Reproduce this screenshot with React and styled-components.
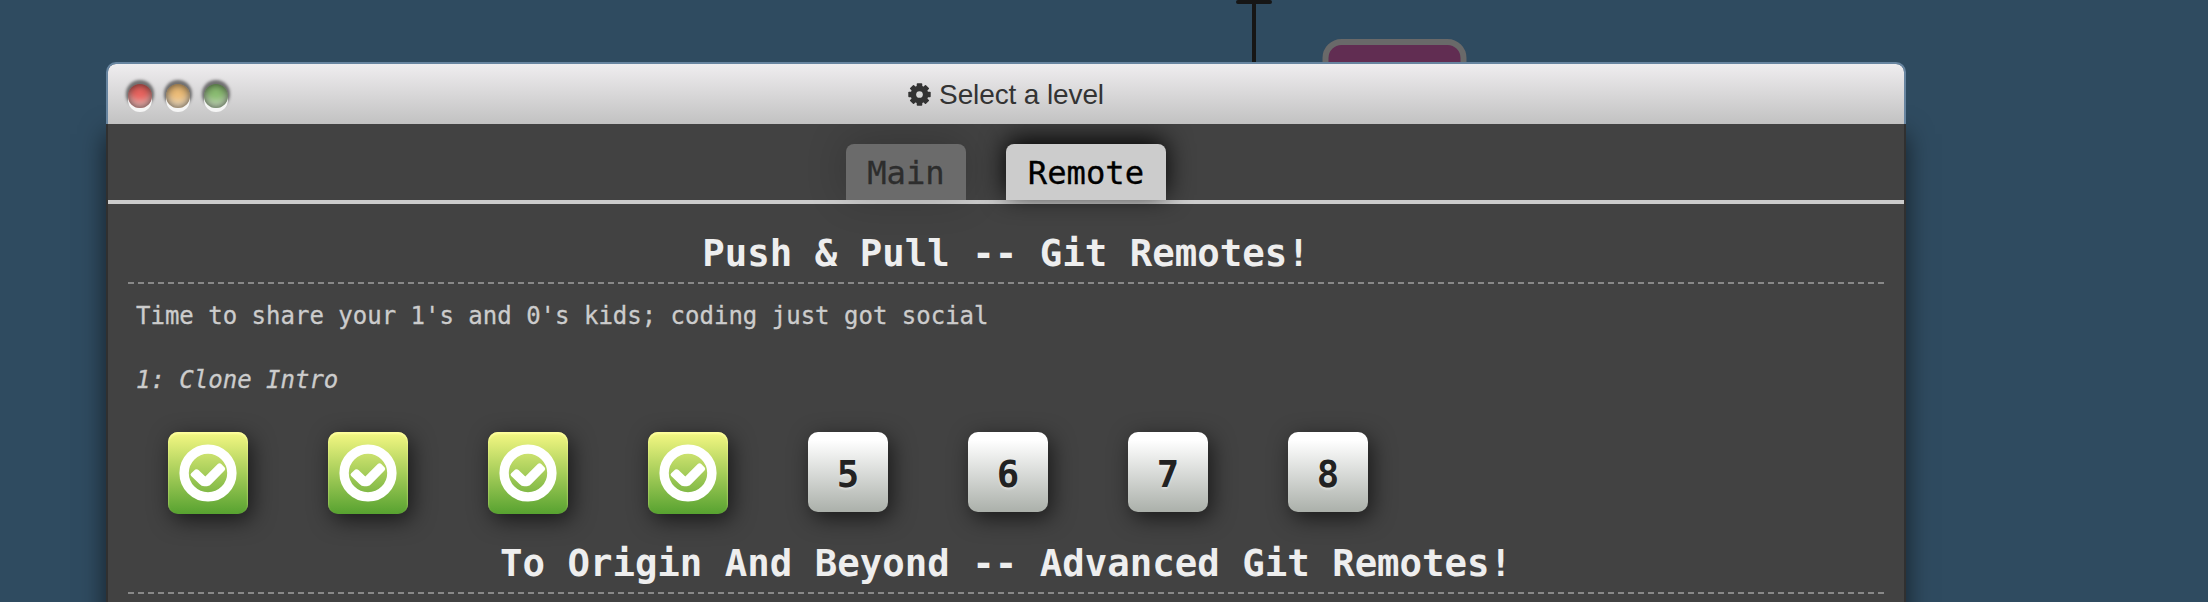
import React from 'react';
import styled, { createGlobalStyle, css } from 'styled-components';

const mono = `"DejaVu Sans Mono", "Liberation Mono", monospace`;

const GlobalStyle = createGlobalStyle`
  * { box-sizing: border-box; }
  body { margin: 0; background: #2f4b60; overflow: hidden; }
`;

const Desktop = styled.main`
  position: relative;
  height: 602px;
  padding: 62px 302px 0 106px;
  overflow: hidden;
  background: #2f4b60;
  font-family: ${mono};
`;

const CommitTree = styled.svg`
  position: absolute;
  left: 1180px;
  top: 0;
`;

const Window = styled.section`
  position: relative;
  width: 1800px;
`;

const TitleBar = styled.header`
  position: relative;
  z-index: 1;
  display: flex;
  align-items: center;
  height: 62px;
  padding: 3px 20px 0;
  border: 2px solid #6885a0;
  border-bottom: 0;
  border-radius: 10px 10px 0 0;
  background: linear-gradient(#efedef, #c2c2c2);
  background-clip: padding-box;
`;

const Lights = styled.div`
  display: flex;
  flex: 1;
  gap: 14px;
`;

const Light = styled.span`
  width: 24px;
  height: 24px;
  border-radius: 50%;
  background: ${(p) => p.$color};
  box-shadow: 0 4px 0 #f5f5f5, 0 -2px 3px 2px rgba(0, 0, 0, 0.5),
    inset 0 0 8px rgba(0, 0, 0, 0.7), inset 0 -7px 6px rgba(255, 255, 255, 0.55);
`;

const Title = styled.h1`
  display: flex;
  align-items: center;
  gap: 8px;
  margin: 0 0 2px;
  color: #333;
  font: 400 28px/40px "Liberation Sans", sans-serif;
  letter-spacing: -0.12px;
`;

const Spacer = styled.div`
  flex: 1;
`;

const Body = styled.div`
  height: 600px;
  border: solid #303030;
  border-width: 0 2px;
  background: #424242;
  box-shadow: 0 10px 24px rgba(0, 0, 0, 0.6);
`;

const Tabs = styled.nav`
  display: flex;
  justify-content: center;
  gap: 40px;
  height: 80px;
  padding-top: 20px;
  border-bottom: 4px solid #ccc;
`;

const Tab = styled.button`
  width: ${(p) => p.$width};
  height: 56px;
  padding: 2px 0 0;
  border: 0;
  border-radius: 8px 8px 0 0;
  font: 400 32.2px/54px ${mono};
  -webkit-text-stroke: 0.3px;
  ${(p) =>
    p.$active
      ? css`
          color: #000;
          background: #ccc;
          box-shadow: 0 -5px 26px rgba(0, 0, 0, 0.95);
        `
      : css`
          color: #2d2d2d;
          background: #6b6b6b;
          box-shadow: 0 -4px 40px rgba(0, 0, 0, 0.2);
        `}
`;

const Levels = styled.div`
  padding: 20px 20px 0;
`;

const Heading = styled.h2`
  height: 60px;
  margin: 0;
  padding-top: 1px;
  border-bottom: 2px dashed #888;
  color: #eee;
  font: 700 37.36px/56px ${mono};
  text-align: center;
  white-space: pre;
`;

const Intro = styled.p`
  margin: 0;
  padding: 12px 8px 0;
  color: #ccc;
  font: 400 24px/40px ${mono};
  -webkit-text-stroke: 0.3px;
`;

const LevelName = styled(Intro)`
  padding-top: 24px;
  font-style: italic;
`;

const IconRow = styled.div`
  display: flex;
  align-items: flex-start;
  gap: 80px;
  height: 102px;
  margin: 32px 0 0 40px;
`;

const LevelIcon = styled.button`
  display: grid;
  place-items: center;
  width: 80px;
  height: ${(p) => (p.$solved ? 82 : 80)}px;
  padding: ${(p) => (p.$solved ? 0 : '4px 0 0')};
  border: 0;
  border-radius: 10px;
  color: #222;
  font: 700 37.3px/76px ${mono};
  text-shadow: 0 2px 2px rgba(255, 255, 255, 0.4);
  background: ${(p) =>
    p.$solved
      ? 'linear-gradient(#f5f883, #57a230)'
      : 'linear-gradient(#fff 10%, #abb0aa)'};
  box-shadow: 4px 6px 22px rgba(0, 0, 0, 0.62)
    ${(p) => (p.$solved ? ', inset 0 2px 2px rgba(255, 255, 160, 0.9)' : '')};
`;

const Gear = () => (
  <svg width="23" height="23" viewBox="-12 -12 24 24">
    <g fill="#333">
      {[0, 45, 90, 135].map((angle) => (
        <rect key={angle} x="-2.9" y="-11.7" width="5.8" height="23.4" rx="0.8" transform={`rotate(${angle})`} />
      ))}
    </g>
    <circle r="6.4" fill="none" stroke="#333" strokeWidth="5.8" />
    <circle r="3.5" fill="#d8d8d8" />
  </svg>
);

const Check = () => (
  <svg width="58" height="58" viewBox="0 0 58 58">
    <circle cx="29" cy="29" r="23.9" fill="none" stroke="#fff" strokeWidth="9.4" />
    <path
      d="M12.2 29.2 16.2 25.6Q18 24.6 19.5 26L26.3 32.4 38.5 20.2Q40.6 18.5 42.3 20L45.7 23.6Q46.9 25 45.5 26.5L32.5 39.8Q30.8 42.2 28 42.2H25.3Q22.5 42.2 20.5 40L12.2 32Q10.8 30.6 12.2 29.2Z"
      fill="#fff"
    />
  </svg>
);

const levels = [1, 2, 3, 4, 5, 6, 7, 8];
const solvedCount = 4;

export default function App() {
  return (
    <Desktop>
      <GlobalStyle />
      <CommitTree width="320" height="80">
        <path d="M74 2V70M58 2H90" stroke="#161616" strokeWidth="4" strokeLinecap="round" />
        <rect x="145.5" y="42" width="138" height="80" rx="16" fill="#612d52" stroke="#696969" strokeWidth="6" />
      </CommitTree>
      <Window>
        <TitleBar>
          <Lights>
            <Light $color="#e8645f" />
            <Light $color="#edbd78" />
            <Light $color="#8bbd72" />
          </Lights>
          <Title>
            <Gear />
            Select a level
          </Title>
          <Spacer />
        </TitleBar>
        <Body>
          <Tabs>
            <Tab $width="120px">Main</Tab>
            <Tab $width="160px" $active>Remote</Tab>
          </Tabs>
          <Levels>
            <Heading>Push &amp; Pull -- Git Remotes!</Heading>
            <Intro>Time to share your 1's and 0's kids; coding just got social</Intro>
            <LevelName>1: Clone Intro</LevelName>
            <IconRow>
              {levels.map((n) => (
                <LevelIcon key={n} $solved={n <= solvedCount}>
                  {n <= solvedCount ? <Check /> : n}
                </LevelIcon>
              ))}
            </IconRow>
            <Heading>To Origin And Beyond -- Advanced Git Remotes!</Heading>
          </Levels>
        </Body>
      </Window>
    </Desktop>
  );
}
